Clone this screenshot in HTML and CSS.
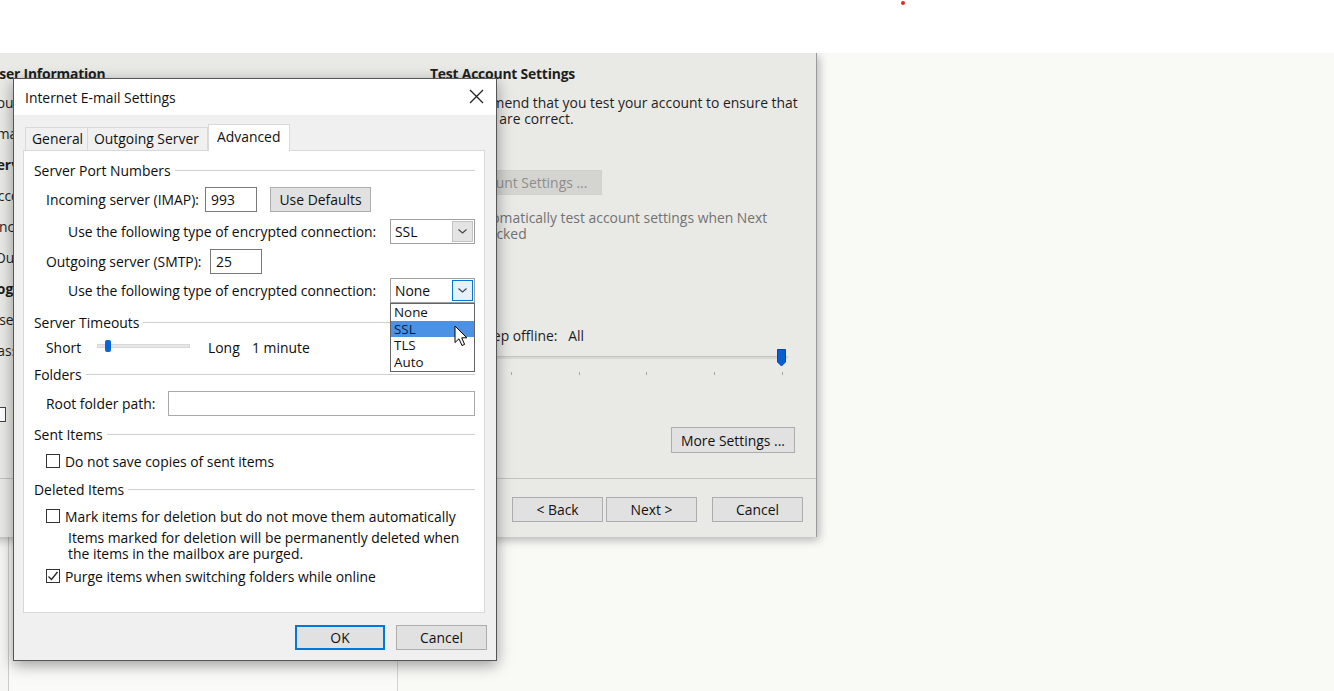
FILE: index.html
```html
<!DOCTYPE html>
<html>
<head>
<meta charset="utf-8">
<title>Internet E-mail Settings</title>
<link rel="stylesheet" href="styles.css">
</head>
<body>
<div class="topband"><span class="rec-dot"></span></div>
<div class="stage">
  <div class="desk">
    <div class="desk-a"></div>
    <div class="desk-b"></div>
    <div class="desk-c"></div>
  </div>

  <div class="win-bg">
    <div class="bg-cols">
      <div class="bg-left">
        <div class="bg-head">User Information</div>
        <div class="bg-list">
          <div class="bg-row">Your Name:</div>
          <div class="bg-row">Email Address:</div>
          <div class="bg-row bold">Server Information</div>
          <div class="bg-row">Account Type:</div>
          <div class="bg-row shifted">Incoming mail server:</div>
          <div class="bg-row shifted">Outgoing mail server (SMTP):</div>
          <div class="bg-row bold">Logon Information</div>
          <div class="bg-row">User Name:</div>
          <div class="bg-row">Password:</div>
        </div>
        <div class="bg-remember"><span class="cb cb-bg"></span><span>Remember password</span></div>
      </div>
      <div class="bg-right">
        <div class="bg-head">Test Account Settings</div>
        <div class="bg-para">We recommend that you test your account to ensure that<br>the entries are correct.</div>
        <div class="btn btn-disabled">Test Account Settings ...</div>
        <div class="bg-auto"><span class="cb cb-dis"></span><span>Automatically test account settings when Next<br>is clicked</span></div>
        <div class="bg-offline">Mail to keep offline:&nbsp;&nbsp;&nbsp;All</div>
        <div class="bg-slider">
          <div class="bg-track"></div>
          <div class="bg-ticks"><i></i><i></i><i></i><i></i><i></i><i></i></div>
          <svg class="bg-thumb" width="11" height="19" viewBox="0 0 11 19"><path d="M1.5 1.5 H9.5 V14 L5.5 18 L1.5 14 Z" fill="#0a5fd0" stroke="#0747a6" stroke-width="1"/></svg>
        </div>
        <div class="btn btn-more">More Settings ...</div>
      </div>
    </div>
    <div class="bg-sep"></div>
    <div class="bg-footer">
      <div class="btn btn-nav">&lt; Back</div>
      <div class="btn btn-nav">Next &gt;</div>
      <div class="btn btn-nav btn-cancel-bg">Cancel</div>
    </div>
  </div>

  <div class="win-fg">
    <div class="fg-title">
      <span>Internet E-mail Settings</span>
      <svg class="close" width="15" height="15" viewBox="0 0 15 15"><path d="M1 1 L14 14 M14 1 L1 14" stroke="#222" stroke-width="1.3" fill="none"/></svg>
    </div>
    <div class="fg-body">
      <div class="tabs">
        <div class="tab t-gen">General</div>
        <div class="tab t-out">Outgoing Server</div>
        <div class="tab t-adv active">Advanced</div>
      </div>
      <div class="panel">
        <div class="grp g1"><span>Server Port Numbers</span><i></i></div>
        <div class="row r-in">
          <span class="lbl-in">Incoming server (IMAP):</span>
          <div class="field f-port">993</div>
          <div class="btn btn-def">Use Defaults</div>
        </div>
        <div class="row r-enc r-enc1">
          <span>Use the following type of encrypted connection:</span>
          <div class="select">
            <span>SSL</span>
            <span class="sel-btn"><svg width="11" height="7" viewBox="0 0 11 7"><path d="M1.5 1.5 L5.5 5 L9.5 1.5" stroke="#444" stroke-width="1.1" fill="none"/></svg></span>
          </div>
        </div>
        <div class="row r-out">
          <span class="lbl-out">Outgoing server (SMTP):</span>
          <div class="field f-port">25</div>
        </div>
        <div class="row r-enc r-enc2">
          <span>Use the following type of encrypted connection:</span>
          <div class="select focused">
            <span>None</span>
            <span class="sel-btn"><svg width="11" height="7" viewBox="0 0 11 7"><path d="M1.5 1.5 L5.5 5 L9.5 1.5" stroke="#444" stroke-width="1.1" fill="none"/></svg></span>
            <div class="dropdown">
              <div class="opt">None</div>
              <div class="opt hl">SSL</div>
              <div class="opt">TLS</div>
              <div class="opt">Auto</div>
              <svg class="cursor" width="14" height="22" viewBox="0 0 14 22"><path d="M1 1 V17.5 L5 13.8 L8 20.5 L10.6 19.4 L7.7 12.8 H12.8 Z" fill="#fff" stroke="#000" stroke-width="1" stroke-linejoin="round"/></svg>
            </div>
          </div>
        </div>
        <div class="grp g2"><span>Server Timeouts</span><i></i></div>
        <div class="row r-short">
          <span class="lbl-short">Short</span>
          <div class="fg-track"><span class="fg-thumb"></span></div>
          <span class="lbl-long">Long</span>
          <span>1 minute</span>
        </div>
        <div class="grp g3"><span>Folders</span><i></i></div>
        <div class="row r-root">
          <span class="lbl-root">Root folder path:</span>
          <div class="field f-root"></div>
        </div>
        <div class="grp g4"><span>Sent Items</span><i></i></div>
        <div class="row r-cb r-cb1"><span class="cb"></span><span>Do not save copies of sent items</span></div>
        <div class="grp g5"><span>Deleted Items</span><i></i></div>
        <div class="row r-cb r-cb2"><span class="cb"></span><span>Mark items for deletion but do not move them automatically</span></div>
        <div class="note">Items marked for deletion will be permanently deleted when<br>the items in the mailbox are purged.</div>
        <div class="row r-cb r-cb3"><span class="cb checked"><svg width="12" height="12" viewBox="0 0 12 12"><path d="M1.5 6.5 L4.5 9.5 L10.5 2" stroke="#222" stroke-width="1.3" fill="none"/></svg></span><span>Purge items when switching folders while online</span></div>
      </div>
      <div class="fg-actions">
        <div class="btn btn-ok">OK</div>
        <div class="btn btn-cancel">Cancel</div>
      </div>
    </div>
  </div>
</div>
</body>
</html>
```

FILE: styles.css
```css
* { box-sizing: border-box; }
html, body { margin: 0; padding: 0; }
body {
  width: 1334px;
  height: 691px;
  overflow: hidden;
  background: #ffffff;
  font-family: "Open Sans", "Noto Sans", "DejaVu Sans", sans-serif;
  font-size: 13.9px;
  font-weight: 500;
  color: #0d0d0d;
}

.topband { height: 53px; background: #ffffff; padding: 1px 0 0 901px; }
.rec-dot { display: block; width: 4px; height: 4px; border-radius: 50%; background: #e3262a; }

.stage { position: relative; height: 638px; background: #f9faf6; overflow: hidden; }
.desk { display: flex; height: 100%; }
.desk-a { width: 9px; border-right: 1px solid #cdcdcd; background: #f6f6f4; }
.desk-b { width: 389px; border-right: 1px solid #d4d4d4; background: #fafbf8; }
.desk-c { flex: 1; }

/* ---------- controls ---------- */
.btn {
  display: flex;
  align-items: center;
  justify-content: center;
  background: #e1e1e1;
  border: 1px solid #adadad;
  color: #111;
  white-space: nowrap;
}
.cb {
  display: inline-flex;
  align-items: center;
  justify-content: center;
  width: 14px;
  height: 14px;
  border: 1px solid #333;
  background: #fff;
  flex: none;
}
.field { height: 25px; border: 1px solid #7a7a7a; background: #fff; padding-left: 5px; line-height: 23px; }

/* ---------- background window ---------- */
.win-bg {
  position: absolute;
  left: -20px;
  top: 0;
  width: 837px;
  height: 484px;
  background: #e9eae6;
  border-right: 1px solid #9a9a9a;
  box-shadow: 2px 3px 9px rgba(0, 0, 0, 0.28);
  display: flex;
  flex-direction: column;
}
.bg-cols { display: flex; height: 425px; padding-top: 13px; }
.bg-left { width: 450px; padding-left: 9px; white-space: nowrap; overflow: hidden; }
.bg-right { width: 386px; display: flex; flex-direction: column; white-space: nowrap; }
.bg-head { height: 16px; line-height: 16px; font-weight: 700; color: #1e1e1e; letter-spacing: -0.2px; }
.bg-list { margin-top: 5px; }
.bg-row { height: 31px; line-height: 31px; color: #1e1e1e; }
.bg-row.bold { font-weight: 700; }
.bg-row.shifted { padding-left: 6px; }
.bg-remember { margin-top: 40px; margin-left: 3px; display: flex; align-items: center; gap: 6px; height: 16px; }
.cb-bg { width: 14px; height: 15px; border-color: #444; }

.bg-para { margin-top: 13px; margin-left: -4px; line-height: 16px; color: #1e1e1e; }
.btn.btn-disabled {
  margin-top: 43px;
  width: 172px;
  height: 25px;
  padding-right: 10px;
  background: #d4d4d1;
  border: 1px solid #d0d0cd;
  color: #8e8e8e;
}
.bg-auto { margin-top: 15px; display: flex; gap: 6px; line-height: 16px; color: #727272; padding-left: 19px; }
.cb.cb-dis { margin-top: 2px; border-color: #b5b5b5; background: #f2f2f0; }
.bg-offline { margin-top: 86px; height: 16px; line-height: 16px; color: #1e1e1e; }
.bg-slider { position: relative; margin-top: 3px; margin-left: 8px; width: 350px; height: 30px; }
.bg-track { margin-top: 9px; height: 3px; background: #d8d8d5; border-top: 1px solid #c4c4c1; }
.bg-ticks { display: flex; justify-content: space-between; padding: 0 5px; margin-top: 13px; }
.bg-ticks i { display: block; width: 1px; height: 3px; background: #a5a5a5; }
.bg-thumb { position: absolute; left: 338px; top: 1px; }
.btn.btn-more { margin-top: 50px; align-self: flex-end; margin-right: 21px; width: 124px; height: 26px; }

.bg-sep { height: 1px; background: #c3c3c0; }
.bg-footer { display: flex; justify-content: flex-end; padding: 18px 13px 0 0; }
.btn.btn-nav { width: 91px; height: 25px; margin-left: 3px; }
.btn.btn-cancel-bg { margin-left: 15px; }

/* ---------- front dialog ---------- */
.win-fg {
  position: absolute;
  left: 13px;
  top: 25px;
  width: 484px;
  height: 583px;
  border: 1px solid #555;
  background: #f0f0f0;
  box-shadow: 0 4px 14px rgba(0, 0, 0, 0.38);
  display: flex;
  flex-direction: column;
}
.fg-title {
  height: 36px;
  background: #ffffff;
  display: flex;
  align-items: center;
  justify-content: space-between;
  padding: 0 12px 0 11px;
  color: #111;
}
.close { margin-top: -2px; }
.fg-body { flex: 1; padding: 9px 9px 0 9px; display: flex; flex-direction: column; }

.tabs { display: flex; align-items: flex-end; height: 26px; padding-left: 2px; }
.tab {
  height: 23px;
  line-height: 21px;
  border: 1px solid #d9d9d9;
  border-bottom: none;
  background: #f0f0f0;
  padding: 0 6px;
  white-space: nowrap;
  color: #111;
}
.t-gen { width: 63px; }
.t-out { width: 120px; border-left: none; }
.t-adv { width: 82px; }
.tab.active {
  height: 27px;
  line-height: 24px;
  background: #fff;
  margin-bottom: -1px;
  position: relative;
  z-index: 1;
  padding-left: 8px;
}

.panel {
  height: 463px;
  margin-right: 2px;
  background: #fff;
  border: 1px solid #d9d9d9;
  padding: 0 9px 0 10px;
  display: flex;
  flex-direction: column;
  color: #0d0d0d;
}
.grp { display: flex; align-items: center; height: 16px; white-space: nowrap; }
.grp i { flex: 1; height: 1px; background: #cfcfcf; margin-left: 4px; margin-top: 1px; }
.g1 { margin-top: 11px; }
.g2 { margin-top: 11px; }
.g3 { margin-top: 9px; }
.g4 { margin-top: 10px; }
.g5 { margin-top: 12px; }

.row { display: flex; align-items: center; white-space: nowrap; padding-left: 12px; }
.r-in { margin-top: 9px; height: 25px; }
.lbl-in { width: 159px; }
.f-port { width: 52px; }
.btn.btn-def { margin-left: 13px; width: 101px; height: 25px; }
.r-enc { padding-left: 34px; height: 25px; }
.r-enc1 { margin-top: 7px; }
.r-out { margin-top: 5px; height: 25px; }
.lbl-out { width: 164px; }
.r-enc2 { margin-top: 4px; position: relative; z-index: 2; }

.select {
  position: relative;
  margin-left: auto;
  width: 85px;
  height: 25px;
  border: 1px solid #a0a0a0;
  background: #fff;
  display: flex;
  align-items: center;
  justify-content: space-between;
  padding: 0 1px 0 4px;
}
.sel-btn {
  width: 21px;
  height: 21px;
  background: #e4e4e4;
  border: 1px solid #c2c2c2;
  display: flex;
  align-items: center;
  justify-content: center;
}
.select.focused .sel-btn { background: #e5f1fb; border-color: #0078d7; }

.dropdown {
  position: absolute;
  left: -1px;
  top: 24px;
  width: 85px;
  border: 1px solid #646464;
  background: #fff;
  padding: 0 0 1px 0;
}
.opt { height: 16.5px; line-height: 16px; padding-left: 3px; font-size: 13.4px; color: #111; }
.opt.hl { background: #4b92e5; color: #0b1a3a; }
.cursor { position: absolute; left: 63px; top: 21px; }

.r-short { margin-top: 7px; height: 20px; }
.lbl-short { width: 51px; }
.fg-track {
  position: relative;
  width: 93px;
  height: 4px;
  margin-top: -3px;
  background: #e6e6e6;
  border: 1px solid #d8d8d8;
}
.fg-thumb {
  position: absolute;
  left: 7px;
  top: -5px;
  width: 6px;
  height: 12px;
  border-radius: 2px;
  background: #0a66d4;
}
.lbl-long { margin-left: 18px; width: 44px; }

.r-root { margin-top: 9px; height: 25px; }
.lbl-root { width: 122px; }
.f-root { flex: 1; border-color: #a9a9a9; }

.r-cb { height: 16px; gap: 5px; }
.r-cb1 { margin-top: 11px; }
.r-cb2 { margin-top: 11px; }
.note { margin-top: 6px; padding-left: 34px; line-height: 16px; white-space: nowrap; }
.r-cb3 { margin-top: 6px; }

.fg-actions { display: flex; justify-content: flex-end; gap: 11px; margin-top: 12px; }
.btn.btn-ok, .btn.btn-cancel { width: 91px; height: 25px; }
.btn.btn-ok { width: 90px; border: 1px solid #0078d7; box-shadow: inset 0 0 0 1px #0078d7; }
```
